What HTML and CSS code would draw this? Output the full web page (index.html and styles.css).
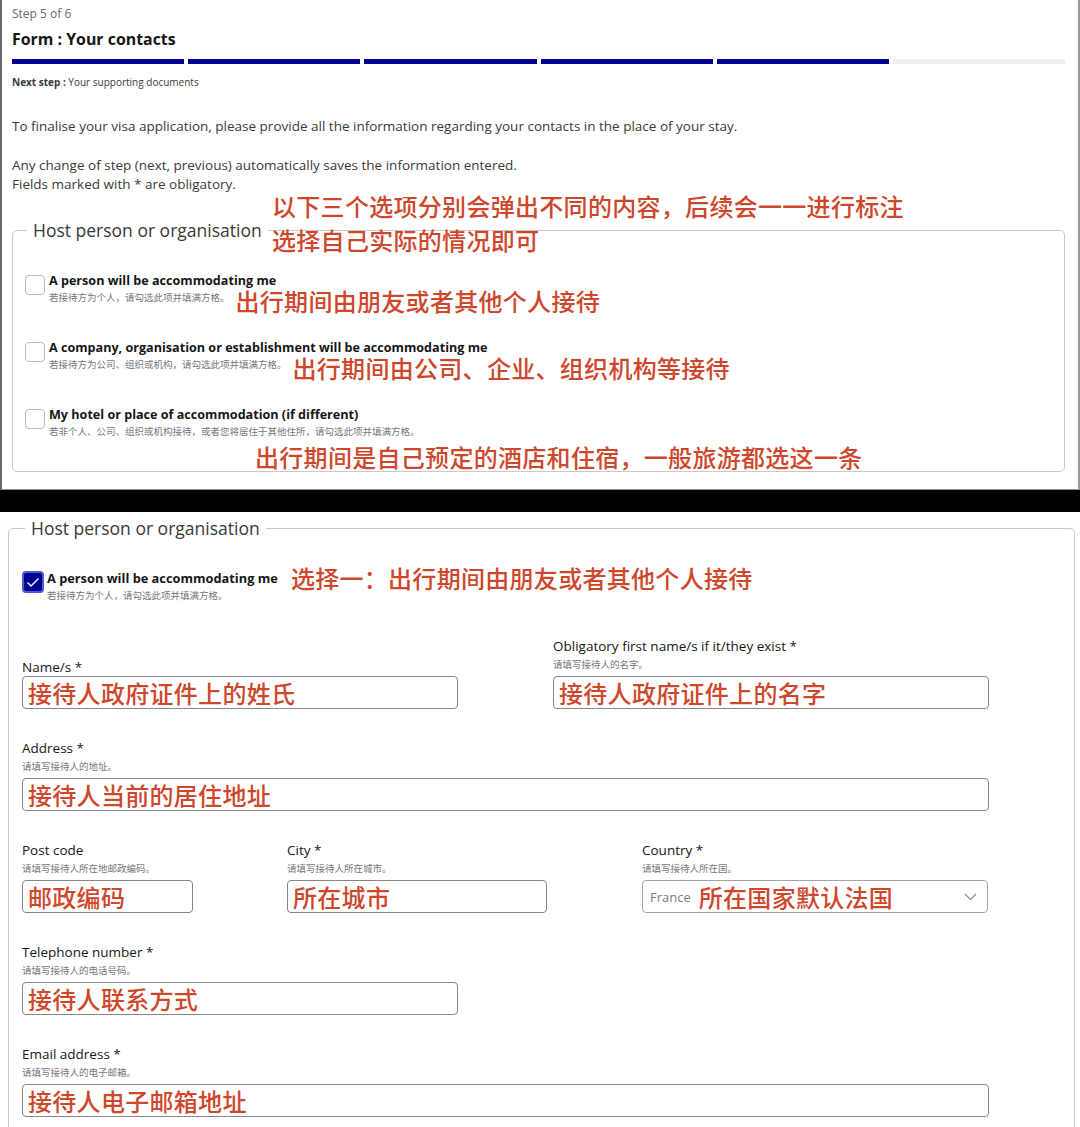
FILE: index.html
```html
<!DOCTYPE html>
<html lang="en">
<head>
<meta charset="utf-8">
<title>Form : Your contacts</title>
<link rel="stylesheet" href="styles.css">
</head>
<body>
<section class="shot shot-top">
  <p class="step-count">Step 5 of 6</p>
  <h1 class="step-title">Form : Your contacts</h1>
  <div class="stepper">
    <span class="seg done"></span>
    <span class="seg done"></span>
    <span class="seg done"></span>
    <span class="seg done"></span>
    <span class="seg done"></span>
    <span class="seg"></span>
  </div>
  <p class="next-step"><b>Next step :</b> Your supporting documents</p>
  <p class="intro">To finalise your visa application, please provide all the information regarding your contacts in the place of your stay.</p>
  <p class="intro intro-2">Any change of step (next, previous) automatically saves the information entered.<br>Fields marked with * are obligatory.</p>
  <div class="note note-top">以下三个选项分别会弹出不同的内容，后续会一一进行标注<br>选择自己实际的情况即可</div>
  <fieldset class="group">
    <legend>Host person or organisation</legend>
    <div class="option">
      <span class="box"></span>
      <div class="opt-text">
        <div class="opt-label">A person will be accommodating me</div>
        <div class="hint-row"><span class="hint">若接待方为个人，请勾选此项并填满方格。</span><span class="note note-inline">出行期间由朋友或者其他个人接待</span></div>
      </div>
    </div>
    <div class="option">
      <span class="box"></span>
      <div class="opt-text">
        <div class="opt-label">A company, organisation or establishment will be accommodating me</div>
        <div class="hint-row"><span class="hint">若接待方为公司、组织或机构，请勾选此项并填满方格。</span><span class="note note-inline">出行期间由公司、企业、组织机构等接待</span></div>
      </div>
    </div>
    <div class="option option-last">
      <span class="box"></span>
      <div class="opt-text">
        <div class="opt-label">My hotel or place of accommodation (if different)</div>
        <div class="hint-row"><span class="hint">若非个人、公司、组织或机构接待，或者您将居住于其他住所，请勾选此项并填满方格。</span></div>
        <div class="note note-below">出行期间是自己预定的酒店和住宿，一般旅游都选这一条</div>
      </div>
    </div>
  </fieldset>
</section>
<div class="divider"></div>
<section class="shot shot-bottom">
  <fieldset class="group group-2">
    <legend>Host person or organisation</legend>
    <div class="option option-checked">
      <span class="box checked"><svg width="14" height="11" viewBox="0 0 14 11"><polyline points="1.5,5.5 5,9 12.5,1.5" fill="none" stroke="#fff" stroke-width="1.4"/></svg></span>
      <div class="opt-text">
        <div class="label-row"><span class="opt-label">A person will be accommodating me</span><span class="note note-label">选择一：出行期间由朋友或者其他个人接待</span></div>
        <div class="hint-row"><span class="hint">若接待方为个人，请勾选此项并填满方格。</span></div>
      </div>
    </div>

    <div class="fields">
      <div class="row row-names">
        <div class="field">
          <div class="f-label">Name/s *</div>
          <div class="input w-half"><span class="note">接待人政府证件上的姓氏</span></div>
        </div>
        <div class="field">
          <div class="f-label">Obligatory first name/s if it/they exist *</div>
          <div class="f-hint">请填写接待人的名字。</div>
          <div class="input w-half"><span class="note">接待人政府证件上的名字</span></div>
        </div>
      </div>
      <div class="row">
        <div class="field">
          <div class="f-label">Address *</div>
          <div class="f-hint">请填写接待人的地址。</div>
          <div class="input w-full"><span class="note">接待人当前的居住地址</span></div>
        </div>
      </div>
      <div class="row row-three">
        <div class="field">
          <div class="f-label">Post code</div>
          <div class="f-hint">请填写接待人所在地邮政编码。</div>
          <div class="input w-post"><span class="note">邮政编码</span></div>
        </div>
        <div class="field">
          <div class="f-label">City *</div>
          <div class="f-hint">请填写接待人所在城市。</div>
          <div class="input w-city"><span class="note">所在城市</span></div>
        </div>
        <div class="field">
          <div class="f-label">Country *</div>
          <div class="f-hint">请填写接待人所在国。</div>
          <div class="input select w-country">
            <span class="sel-value">France</span>
            <span class="note">所在国家默认法国</span>
            <svg class="chev" width="13" height="8" viewBox="0 0 13 8"><polyline points="1,1 6.5,6.5 12,1" fill="none" stroke="#8a8a8a" stroke-width="1.1"/></svg>
          </div>
        </div>
      </div>
      <div class="row">
        <div class="field">
          <div class="f-label">Telephone number *</div>
          <div class="f-hint">请填写接待人的电话号码。</div>
          <div class="input w-half"><span class="note">接待人联系方式</span></div>
        </div>
      </div>
      <div class="row">
        <div class="field">
          <div class="f-label">Email address *</div>
          <div class="f-hint">请填写接待人的电子邮箱。</div>
          <div class="input w-full"><span class="note">接待人电子邮箱地址</span></div>
        </div>
      </div>
    </div>
  </fieldset>
</section>
</body>
</html>
```

FILE: styles.css
```css
* { box-sizing: border-box; }

html, body {
  margin: 0;
  padding: 0;
  background: #fff;
}

body {
  width: 1080px;
  font-family: "Open Sans", "Noto Sans CJK SC", sans-serif;
  color: #161616;
}

p, h1 { margin: 0; }

.shot {
  position: relative;
  overflow: hidden;
}

.shot-top {
  height: 490px;
  padding: 6px 13px 0 10px;
  border-left: 2px solid #6a6a6a;
  border-right: 2px solid #9a9a9a;
  border-bottom: 1px solid #8a8a8a;
}

.step-count {
  font-size: 12px;
  line-height: 16px;
  color: #6a6a6a;
}

.step-title {
  margin-top: 7px;
  font-size: 15.9px;
  line-height: 20px;
  font-weight: 700;
  color: #161616;
}

.stepper {
  display: flex;
  gap: 4px;
  margin-top: 10px;
  height: 5px;
}

.seg {
  flex: 1;
  background: #eeeeee;
}

.seg.done { background: #000091; }

.next-step {
  margin-top: 11px;
  font-size: 10px;
  line-height: 14px;
  color: #3a3a3a;
}

.next-step b { font-weight: 700; }

.intro {
  margin-top: 28px;
  font-size: 13.5px;
  line-height: 19px;
  color: #3a3a3a;
}

.intro-2 { margin-top: 20px; }

.note {
  font-family: "Noto Sans CJK SC", sans-serif;
  font-weight: 500;
  font-size: 24px;
  line-height: 24px;
  letter-spacing: 0.3px;
  color: #cf472b;
  white-space: nowrap;
}

.note-top {
  position: absolute;
  left: 270px;
  top: 189px;
  line-height: 34px;
  z-index: 2;
}

/* fieldset */
.group {
  margin: 26px 0 0 0;
  padding: 33px 12px 2px 12px;
  border: 1px solid #c9c9c9;
  border-radius: 5px;
  min-width: 0;
}

.group legend {
  margin-left: 2px;
  padding: 0 6px;
  font-size: 17.5px;
  line-height: 20px;
  color: #3a3a3a;
}

.option {
  display: flex;
  gap: 4px;
  margin-bottom: 27px;
}

.option-last { margin-bottom: 0; }

.box {
  flex: none;
  width: 20px;
  height: 20px;
  margin-top: 2px;
  border: 1px solid #bdbdbd;
  border-radius: 4px;
  background: #fff;
}

.opt-label {
  font-size: 12.6px;
  line-height: 16px;
  font-weight: 700;
  color: #161616;
}

.hint-row {
  display: flex;
  align-items: flex-start;
  gap: 6px;
  margin-top: 0;
}

.hint {
  margin-top: 2px;
  font-family: "Noto Sans CJK SC", sans-serif;
  font-size: 9.5px;
  line-height: 12px;
  color: #777;
  white-space: nowrap;
}

.note-below {
  margin: 8px 0 0 206px;
}

.divider {
  height: 22px;
  background: #000;
}

/* second shot */
.shot-bottom {
  height: 615px;
  padding: 6px 5px 0 8px;
}

.group-2 {
  margin-top: 0;
  padding: 28px 14px 40px 14px;
}

.option-checked {
  gap: 3px;
  margin-bottom: 36px;
}

.box.checked {
  width: 22px;
  height: 22px;
  margin-top: 5px;
  margin-left: -1px;
  border: 2px solid #4a5ed4;
  background: #000091;
  display: flex;
  align-items: center;
  justify-content: center;
}

.label-row {
  display: flex;
  align-items: center;
  gap: 13px;
}

.option-checked .opt-label { font-size: 12.8px; }

.option-checked .hint-row { margin-top: -3px; }

.fields {
  margin-left: -1px;
  display: flex;
  flex-direction: column;
  gap: 30px;
}

.row {
  display: grid;
  grid-template-columns: 1fr;
  align-items: end;
}

.row-names { grid-template-columns: 531px 436px; }

.row-three { grid-template-columns: 265px 355px 347px; }

.field {
  display: flex;
  flex-direction: column;
}

.f-label {
  font-size: 13.5px;
  line-height: 18px;
  color: #161616;
}

.f-hint {
  margin-top: 2px;
  margin-bottom: 5px;
  font-family: "Noto Sans CJK SC", sans-serif;
  font-size: 9.5px;
  line-height: 14px;
  color: #777;
}

.input {
  height: 33px;
  border: 1px solid #868686;
  border-radius: 4px;
  display: flex;
  align-items: center;
  padding-left: 5px;
  background: #fff;
}

.w-half { width: 436px; }
.w-full { width: 967px; }
.w-post { width: 171px; }
.w-city { width: 260px; }
.w-country { width: 346px; }

.select {
  border-color: #a5a5a5;
  padding-left: 7px;
  gap: 8px;
}

.sel-value {
  font-size: 13px;
  color: #7a7a7a;
}

.chev { margin-left: auto; margin-right: 10px; }
```
